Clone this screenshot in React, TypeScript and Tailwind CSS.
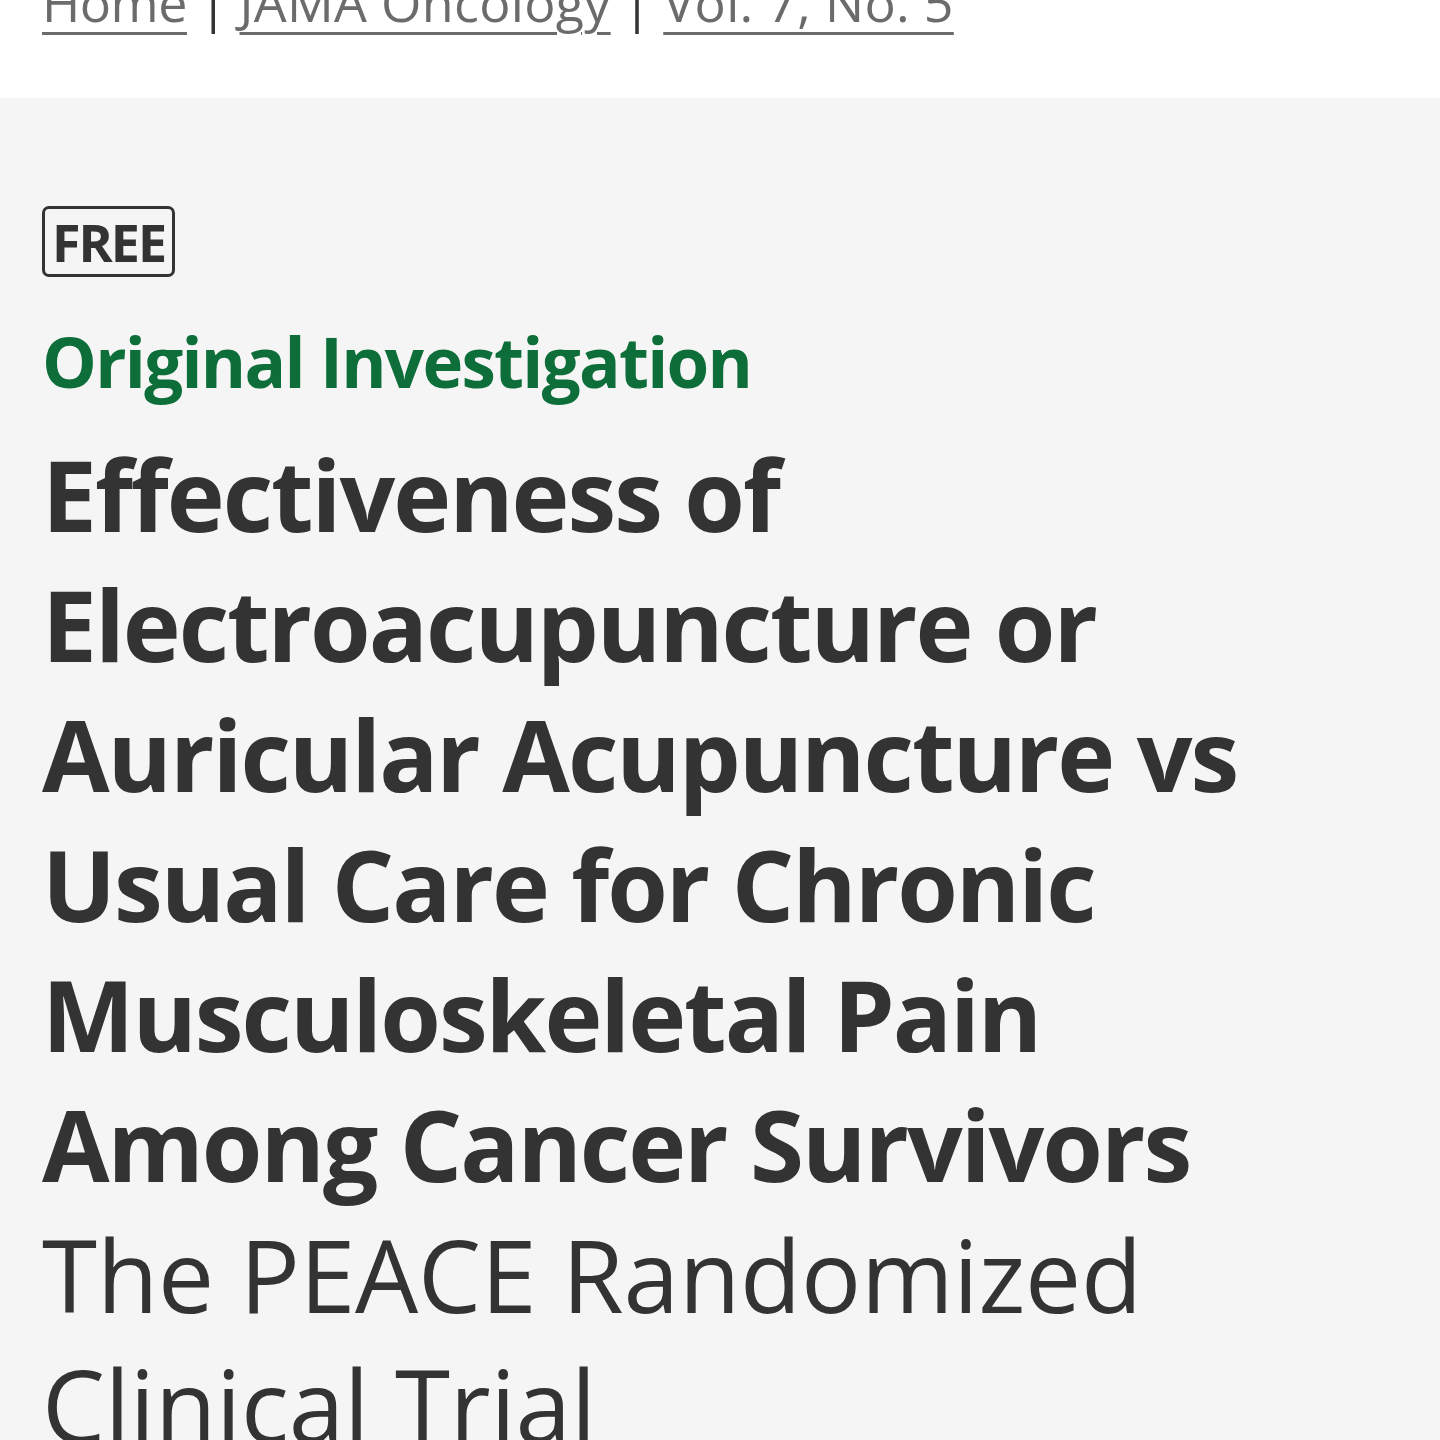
export default function App() {
  return (
    <div className="min-h-[1440px] bg-white font-['Open_Sans',sans-serif] text-[#333]">
      {/* Breadcrumb, cut by the top edge */}
      <nav className="h-[98px] px-[42px] overflow-hidden">
        <div className="-mt-[38px] flex items-center gap-[12px] text-[52px] leading-[80px] text-[#6b6b6b]">
          <a className="underline decoration-[3px] underline-offset-[10px] tracking-[-0.5px]">Home</a>
          <span className="text-[#333]">|</span>
          <a className="underline decoration-[3px] underline-offset-[10px] tracking-[0.3px]">JAMA Oncology</a>
          <span className="text-[#333]">|</span>
          <a className="underline decoration-[3px] underline-offset-[10px] tracking-[0.3px]">Vol. 7, No. 5</a>
        </div>
      </nav>

      <main className="bg-[#f5f5f5] px-[42px] pt-[108px] pb-10 min-h-[1342px]">
        <span className="inline-flex h-[71px] w-[133px] items-center justify-center rounded-[7px] border-[3px] border-[#333] text-[52px] font-bold tracking-[-2px]">
          FREE
        </span>
        <div className="mt-[36px] text-[69px] leading-[96px] font-bold text-[#0d6e3a] tracking-[-1.7px]">
          Original Investigation
        </div>
        <h1 className="mt-[20px] text-[98px] leading-[130px] font-bold tracking-[-2px]">
          Effectiveness of
          <br />
          Electroacupuncture or
          <br />
          Auricular Acupuncture vs
          <br />
          Usual Care for Chronic
          <br />
          Musculoskeletal Pain
          <br />
          Among Cancer Survivors
        </h1>
        <div className="text-[100px] leading-[130px] font-normal tracking-[-0.2px]">
          The PEACE Randomized
          <br />
          Clinical Trial
        </div>
      </main>
    </div>
  );
}
